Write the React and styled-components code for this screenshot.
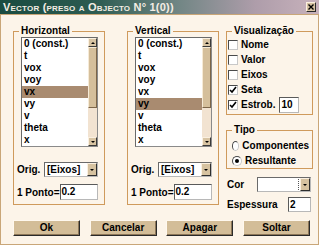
import React from 'react';
import styled, { createGlobalStyle } from 'styled-components';

const GlobalStyle = createGlobalStyle`
  html, body {
    margin: 0;
    padding: 0;
    background: #fcf4e9;
    overflow: hidden;
  }
  * {
    box-sizing: border-box;
  }
`;

const Window = styled.div`
  width: 319px;
  height: 245px;
  background: #fcf4e9;
  border: 1px solid #c9a678;
  border-top: none;
  display: flex;
  flex-direction: column;
  font-family: "Liberation Sans", Arial, sans-serif;
  font-size: 10px;
  font-weight: bold;
  color: #000;
`;

const TitleBar = styled.div`
  height: 15px;
  margin: 0 -1px;
  padding: 0 3px;
  background: linear-gradient(to right, #1a4b40 0%, #2c5b51 30%, #6f8583 55%, #ae9daa 80%, #c8b2bc 100%);
  border-bottom: 1px solid #c9a678;
  display: flex;
  align-items: center;
  justify-content: space-between;
`;

const Title = styled.span`
  color: #f4ede4;
  font-size: 11px;
  font-variant: small-caps;
  letter-spacing: 0.2px;
  white-space: nowrap;
`;

const CloseButton = styled.span`
  width: 10px;
  height: 10px;
  background: #d6c2a2;
  border: 1px solid;
  border-color: #fbf0e0 #2a2a2a #2a2a2a #fbf0e0;
  display: flex;
  align-items: center;
  justify-content: center;
`;

const Body = styled.div`
  padding: 10px 0 0 12px;
  display: flex;
  flex-direction: column;
`;

const Columns = styled.div`
  display: flex;
  align-items: flex-start;
`;

const Group = styled.fieldset`
  margin: ${p => p.$mt || 0}px ${p => p.$gap || 0}px 0 0;
  padding: ${p => p.$pad || '0 3px 4px'};
  width: ${p => p.$w}px;
  min-width: 0;
  border: 1px solid #cf9a5c;
  display: flex;
  flex-direction: column;
`;

const Legend = styled.legend`
  margin-left: 2px;
  padding: 0 2px;
  line-height: 12px;
  font-size: 10px;
  font-weight: bold;
`;

const ListBox = styled.div`
  display: flex;
  width: 77px;
  height: 110px;
  margin-left: 4px;
  background: #fff;
  border: 1px solid;
  border-color: #6a6a6a #8a8a8a #8a8a8a #6a6a6a;
`;

const Items = styled.ul`
  list-style: none;
  margin: 0;
  padding: 0;
  flex: 1;
  overflow: hidden;
`;

const Item = styled.li`
  height: 12px;
  line-height: 12px;
  padding-left: 2px;
  white-space: nowrap;
  background: ${p => (p.$selected ? '#a98b70' : 'transparent')};
`;

const ScrollBar = styled.div`
  width: 9px;
  display: flex;
  flex-direction: column;
  background: #f2e3d1;
`;

const ScrollButton = styled.div`
  height: 9px;
  background: #d8c4a3;
  border: 1px solid;
  border-color: #fbf0e0 #3a3a3a #3a3a3a #fbf0e0;
  display: flex;
  align-items: center;
  justify-content: center;
`;

const Thumb = styled.div`
  height: 61px;
  background: #d5bf9b;
  border: 1px solid;
  border-color: #f6ead6 #7c6548 #7c6548 #f6ead6;
`;

const Track = styled.div`
  flex: 1;
`;

const Arrow = styled.span`
  width: 0;
  height: 0;
  border-left: 2px solid transparent;
  border-right: 2px solid transparent;
  ${p => (p.$up ? 'border-bottom: 2px solid #000;' : 'border-top: 2px solid #000;')}
`;

const FieldRow = styled.div`
  display: flex;
  align-items: center;
  justify-content: space-between;
  width: ${p => p.$w || 81}px;
  height: ${p => p.$h || 15}px;
  margin-top: ${p => p.$mt || 0}px;
  padding-left: ${p => p.$pl || 0}px;
  white-space: nowrap;
`;

const Select = styled.div`
  width: ${p => p.$w}px;
  height: 15px;
  background: #fff;
  border: 1px solid;
  border-color: #6a6a6a #b8b8b8 #b8b8b8 #6a6a6a;
  display: flex;
`;

const SelectValue = styled.span`
  flex: 1;
  padding-left: 2px;
  line-height: 13px;
  position: relative;
`;

const FocusDots = styled.span`
  position: absolute;
  right: 1px;
  top: 1px;
  bottom: 1px;
  border-left: 1px dotted #555;
`;

const SelectButton = styled.span`
  width: 10px;
  background: #d6c2a0;
  border: 1px solid;
  border-color: #fbf0e0 #2e2e2e #2e2e2e #fbf0e0;
  display: flex;
  align-items: center;
  justify-content: center;
`;

const TextInput = styled.span`
  width: ${p => p.$w}px;
  height: ${p => p.$h || 16}px;
  margin-left: ${p => p.$ml || 0}px;
  background: #fff;
  border: 1px solid;
  border-color: #5a5a5a #b8b8b8 #b8b8b8 #5a5a5a;
  line-height: ${p => (p.$h || 16) - 2}px;
  padding-left: 1px;
`;

const Option = styled.div`
  display: flex;
  align-items: center;
  gap: 3px;
  height: 15px;
  white-space: nowrap;
`;

const CheckBox = styled.span`
  width: 10px;
  height: 10px;
  margin-left: -2px;
  background: #fff;
  border: 1px solid;
  border-color: #4a4a4a #c8c8c8 #c8c8c8 #4a4a4a;
  display: flex;
  align-items: center;
  justify-content: center;
`;

const RadioBox = styled.span`
  width: 10px;
  height: 10px;
  margin-left: 2px;
  border-radius: 50%;
  background: #fff;
  border: 1px solid;
  border-color: #4a4a4a #c8c8c8 #c8c8c8 #4a4a4a;
  display: flex;
  align-items: center;
  justify-content: center;
`;

const RadioDot = styled.span`
  width: 4px;
  height: 4px;
  border-radius: 50%;
  background: #000;
`;

const RightColumn = styled.div`
  width: 87px;
  display: flex;
  flex-direction: column;
`;

const ButtonRow = styled.div`
  width: 297px;
  margin-top: 8px;
  display: flex;
  justify-content: space-between;
`;

const Button = styled.button`
  width: 67px;
  height: 16px;
  padding: 0;
  background: #d3bd98;
  border: 1px solid;
  border-color: #fff8ee #2a2a2a #2a2a2a #fff8ee;
  box-shadow: inset -1px -1px 0 #8c7658;
  font-family: inherit;
  font-size: 10px;
  font-weight: bold;
  color: #000;
  line-height: 14px;
`;

const variables = ['0 (const.)', 't', 'vox', 'voy', 'vx', 'vy', 'v', 'theta', 'x'];

const Tick = () => (
  <svg width="8" height="8" viewBox="0 0 8 8">
    <polyline points="1,4 3,6 7,1" fill="none" stroke="#000" strokeWidth="1.6" />
  </svg>
);

const AxisGroup = ({ title, selected, gap }) => (
  <Group $w={92} $gap={gap}>
    <Legend>{title}</Legend>
    <ListBox>
      <Items>
        {variables.map(v => (
          <Item key={v} $selected={v === selected}>{v}</Item>
        ))}
      </Items>
      <ScrollBar>
        <ScrollButton><Arrow $up /></ScrollButton>
        <Thumb />
        <Track />
        <ScrollButton><Arrow /></ScrollButton>
      </ScrollBar>
    </ListBox>
    <FieldRow $mt={15}>
      <span>Orig.</span>
      <Select $w={54}>
        <SelectValue>[Eixos]</SelectValue>
        <SelectButton><Arrow /></SelectButton>
      </Select>
    </FieldRow>
    <FieldRow $mt={7} $h={16}>
      <span>1 Ponto=</span>
      <TextInput $w={41}>0.2</TextInput>
    </FieldRow>
  </Group>
);

export default function App() {
  return (
    <>
      <GlobalStyle />
      <Window>
        <TitleBar>
          <Title>Vector (preso a Objecto N° 1(0))</Title>
          <CloseButton>
            <svg width="6" height="6" viewBox="0 0 6 6">
              <path d="M0.5 0.5 L5.5 5.5 M5.5 0.5 L0.5 5.5" stroke="#000" strokeWidth="1.4" />
            </svg>
          </CloseButton>
        </TitleBar>
        <Body>
          <Columns>
            <AxisGroup title="Horizontal" selected="vx" gap={22} />
            <AxisGroup title="Vertical" selected="vy" gap={7} />
            <RightColumn>
              <Group $w={87} $pad="0 3px 2px">
                <Legend>Visualização</Legend>
                <Option><CheckBox />Nome</Option>
                <Option><CheckBox />Valor</Option>
                <Option><CheckBox />Eixos</Option>
                <Option><CheckBox><Tick /></CheckBox>Seta</Option>
                <Option>
                  <CheckBox><Tick /></CheckBox>Estrob.
                  <TextInput $w={20} $ml={1}>10</TextInput>
                </Option>
              </Group>
              <Group $w={87} $pad="2px 3px 0" $mt={9}>
                <Legend>Tipo</Legend>
                <Option><RadioBox />Componentes</Option>
                <Option><RadioBox><RadioDot /></RadioBox>Resultante</Option>
              </Group>
              <FieldRow $w={85} $mt={8} $pl={1}>
                <span>Cor</span>
                <Select $w={54}>
                  <SelectValue><FocusDots /></SelectValue>
                  <SelectButton><Arrow /></SelectButton>
                </Select>
              </FieldRow>
              <FieldRow $w={85} $mt={5} $pl={1}>
                <span>Espessura</span>
                <TextInput $w={23} $h={15}>2</TextInput>
              </FieldRow>
            </RightColumn>
          </Columns>
          <ButtonRow>
            <Button>Ok</Button>
            <Button>Cancelar</Button>
            <Button>Apagar</Button>
            <Button>Soltar</Button>
          </ButtonRow>
        </Body>
      </Window>
    </>
  );
}
